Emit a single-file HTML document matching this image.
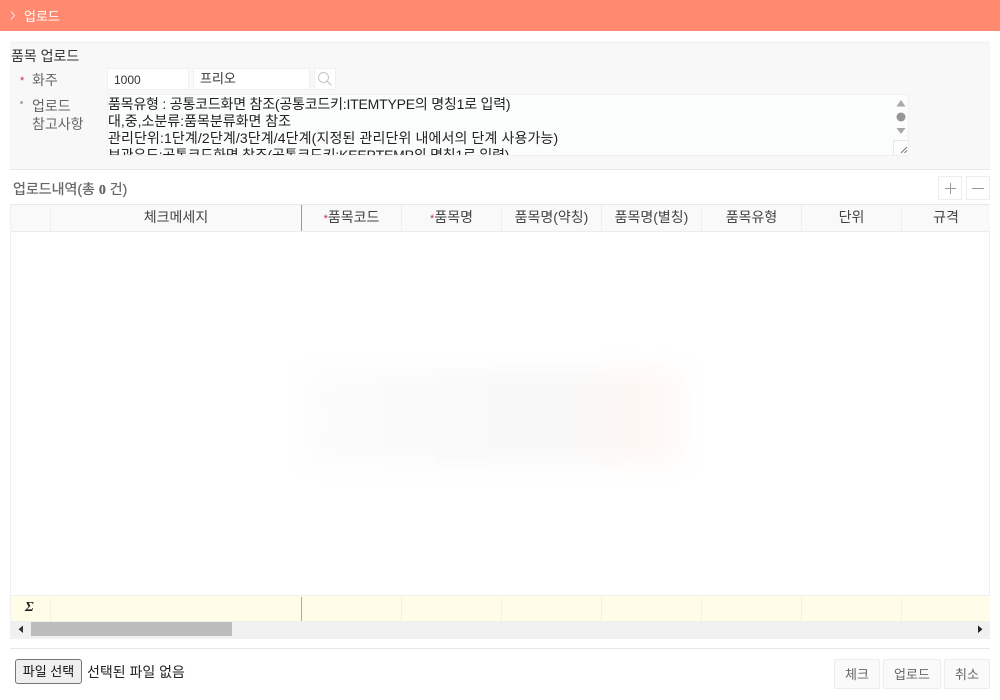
<!DOCTYPE html>
<html lang="ko">
<head>
<meta charset="utf-8">
<style>
html,body{margin:0;padding:0;background:#fff}
body{width:1000px;height:700px;position:relative;overflow:hidden;font-family:"Liberation Sans","Noto Sans CJK KR",sans-serif;font-size:14px;color:#333}
.a{position:absolute;white-space:nowrap}
.th{position:absolute;top:205px;height:26px;line-height:25px;text-align:center;font-size:14px;color:#444;border-right:1px solid #eeeeee;box-sizing:content-box}
.th i{color:#c0304a;font-style:normal;font-size:11px}
.ft{position:absolute;top:597px;height:24px;border-right:1px solid #f3f2de}
.box{position:absolute;background:#fff;border:1px solid #f0f0f0;box-sizing:border-box}
.btn{position:absolute;top:659px;height:30px;line-height:29px;text-align:center;background:#fafafa;border:1px solid #ededed;border-radius:2px;box-sizing:border-box;color:#666;font-size:13px}
.ln{display:block;height:17px}
</style>
</head>
<body>
<div class="a" style="left:0;top:0;width:1000px;height:31px;background:#ff8a70"></div>
<svg class="a" style="left:9px;top:10px" width="8" height="11" viewBox="0 0 8 11"><path d="M2 1.500l3.500 4L2 9.500" fill="none" stroke="#ffe3dc" stroke-width="1"/></svg>
<div class="a" style="left:24px;top:8px;color:#fff;font-size:13px;line-height:17px">업로드</div>

<div class="a" style="left:10px;top:42px;width:980px;height:128px;background:#f8f8f8;border-top:1px solid #f0f0f0;border-bottom:1px solid #e8e8e8;box-sizing:border-box"></div>
<div class="a" style="left:11px;top:47px;font-size:14px;line-height:18px;color:#333">품목 업로드</div>
<div class="a" style="left:20px;top:75px;color:#c0304a;font-size:11px;line-height:12px">*</div>
<div class="a" style="left:32px;top:71px;color:#666;font-size:14px;line-height:18px">화주</div>
<div class="box" style="left:107px;top:68px;width:82px;height:22px;line-height:22px;padding-left:6px;color:#333;font-size:12px">1000</div>
<div class="box" style="left:193px;top:68px;width:117px;height:22px;line-height:19px;padding-left:6px;color:#333;font-size:13px">프리오</div>
<div class="box" style="left:314px;top:68px;width:22px;height:22px"></div>
<svg class="a" style="left:316px;top:70px" width="18" height="18" viewBox="0 0 18 18"><circle cx="7.500" cy="7.500" r="5" fill="none" stroke="#c4c4c4" stroke-width="1"/><path d="M11.200 11.200L15.500 15.500" stroke="#c4c4c4" stroke-width="1.200"/></svg>
<div class="a" style="left:20px;top:101px;width:3px;height:3px;border-radius:50%;background:#aaa"></div>
<div class="a" style="left:32px;top:97px;color:#666;font-size:14px;line-height:18px">업로드<br>참고사항</div>

<div class="a" style="left:107px;top:94px;width:802px;height:62px;background:#fbfcfc;border:1px solid #f0f0f0;box-sizing:border-box;overflow:hidden"></div>
<div class="a" style="left:108px;top:96px;width:785px;height:59px;overflow:hidden;font-size:14px;line-height:17px;color:#222">
<span class="ln" style="letter-spacing:-.2px">품목유형 : 공통코드화면 참조(공통코드키:ITEMTYPE의 명칭1로 입력)</span>
<span class="ln">대,중,소분류:품목분류화면 참조</span>
<span class="ln" style="letter-spacing:.12px">관리단위:1단계/2단계/3단계/4단계(지정된 관리단위 내에서의 단계 사용가능)</span>
<span class="ln" style="letter-spacing:-.2px">보관유도:공통코드화면 참조(공통코드키:KEEPTEMP의 명칭1로 입력)</span>
</div>
<svg class="a" style="left:893px;top:95px" width="16" height="61" viewBox="0 0 16 61">
<path d="M3.500 11.500L8 5l4.500 6.500z" fill="#a8a8a8"/>
<circle cx="8" cy="22" r="4.500" fill="#969696"/>
<path d="M3.500 33L8 39l4.500-6z" fill="#a8a8a8"/>
<path d="M0.500 60V45.500H15.500" fill="none" stroke="#e8e8e8"/>
<path d="M8 58L14 52M11.500 58L14 55.500" stroke="#777" stroke-width="1"/>
</svg>

<div class="a" style="left:13px;top:180px;font-size:14px;line-height:18px;color:#666;-webkit-text-stroke:.2px #666">업로드내역(총 <span style="font-family:'Liberation Serif','Noto Serif CJK SC',serif;font-weight:bold">0</span> 건)</div>
<div class="box" style="left:938px;top:176px;width:24px;height:24px;border-color:#eeeeee"></div>
<div class="box" style="left:966px;top:176px;width:24px;height:24px;border-color:#eeeeee"></div>
<svg class="a" style="left:938px;top:176px" width="52" height="24" viewBox="0 0 52 24"><path d="M7 12.500H18M12.500 7V18M34 12.500H46" stroke="#999" stroke-width="1" fill="none"/></svg>

<div class="a" style="left:10px;top:204px;width:980px;height:435px;border:1px solid #f0f0f0;border-top-color:#e8e8e8;box-sizing:border-box;background:#fff"></div>
<div class="a" style="left:11px;top:205px;width:979px;height:27px;background:#f9f9f9;border-bottom:1px solid #ececec;box-sizing:border-box"></div>
<div class="th" style="left:11px;width:39px"></div>
<div class="th" style="left:51px;width:250px;border-right:1px solid #999">체크메세지</div>
<div class="th" style="left:302px;width:99px"><i>*</i>품목코드</div>
<div class="th" style="left:402px;width:99px"><i>*</i>품목명</div>
<div class="th" style="left:502px;width:99px">품목명(약칭)</div>
<div class="th" style="left:602px;width:99px">품목명(별칭)</div>
<div class="th" style="left:702px;width:99px">품목유형</div>
<div class="th" style="left:802px;width:99px">단위</div>
<div class="th" style="left:902px;width:88px;border-right:0">규격</div>

<div class="a" style="left:305px;top:370px;width:380px;height:95px;background:linear-gradient(90deg,#fcfcfc,#f8f8f8 55%,#f8f8f8 70%,#fdf7f3 88%,#fefbf9);filter:blur(12px)"></div>

<div class="a" style="left:11px;top:595px;width:979px;height:26px;background:#fffde8;border-top:1px solid #f0f0f0;box-sizing:border-box"></div>
<div class="ft" style="left:11px;width:39px"></div>
<div class="ft" style="left:51px;width:250px;border-right:1px solid #aaa"></div>
<div class="ft" style="left:302px;width:99px"></div>
<div class="ft" style="left:402px;width:99px"></div>
<div class="ft" style="left:502px;width:99px"></div>
<div class="ft" style="left:602px;width:99px"></div>
<div class="ft" style="left:702px;width:99px"></div>
<div class="ft" style="left:802px;width:99px"></div>
<div class="a" style="left:25px;top:600px;font-family:'Liberation Serif',serif;font-style:italic;font-weight:bold;font-size:14px;line-height:16px;color:#222">Σ</div>

<div class="a" style="left:11px;top:621px;width:979px;height:17px;background:#f0f0f0"></div>
<div class="a" style="left:31px;top:622px;width:201px;height:14px;background:#bcbcbc"></div>
<svg class="a" style="left:17px;top:625px" width="8" height="9" viewBox="0 0 8 9"><path d="M6 0.500V8L1.500 4.200z" fill="#333"/></svg>
<svg class="a" style="left:976px;top:625px" width="8" height="9" viewBox="0 0 8 9"><path d="M2 0.500V8L6.500 4.200z" fill="#222"/></svg>

<div class="a" style="left:10px;top:648px;width:980px;height:1px;background:#e6e6e6"></div>
<div class="a" style="left:15px;top:659px;width:67px;height:25px;line-height:23px;text-align:center;box-sizing:border-box;background:#efefef;border:1px solid #767676;border-radius:3px;color:#111;font-size:13px">파일 선택</div>
<div class="a" style="left:87px;top:663px;font-size:14px;line-height:18px;color:#222">선택된 파일 없음</div>
<div class="btn" style="left:834px;width:46px">체크</div>
<div class="btn" style="left:883px;width:58px">업로드</div>
<div class="btn" style="left:944px;width:46px">취소</div>
</body>
</html>
